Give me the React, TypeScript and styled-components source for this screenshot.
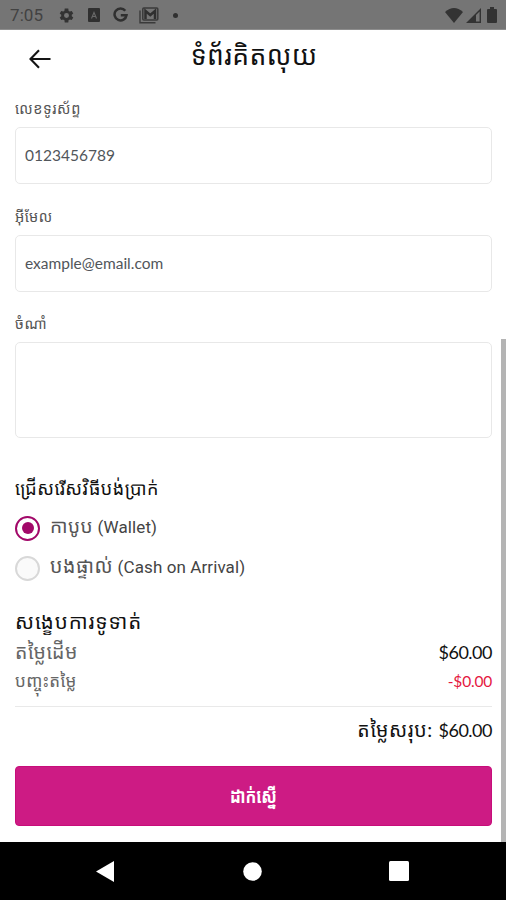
import React from "react";
import styled, { createGlobalStyle } from "styled-components";

const GlobalStyle = createGlobalStyle`
  * { box-sizing: border-box; }
  body { margin: 0; background: #fff; overflow: hidden; }
`;

const khmer = `"Noto Sans Khmer", "Khmer OS"`;

const Screen = styled.div`
  width: 506px;
  height: 900px;
  display: flex;
  flex-direction: column;
  background: #fff;
  color: #111;
  font-family: Lato, ${khmer}, sans-serif;
  white-space: nowrap;
`;

const StatusBar = styled.header`
  height: 30px;
  flex: none;
  display: flex;
  align-items: center;
  justify-content: space-between;
  padding: 1px 9px 0 10px;
  background: #757575;
  border-bottom: 1px solid #8d8d8d;
  color: #333;
`;

const StatusGroup = styled.div<{ $gap: number }>`
  display: flex;
  align-items: center;
  gap: ${(p) => p.$gap}px;
`;

const Clock = styled.span`
  width: 35px;
  font: 17px/20px Roboto, sans-serif;
  letter-spacing: 0.1px;
  color: #424242;
`;

const Body = styled.div`
  flex: 1;
  display: flex;
  justify-content: space-between;
  min-height: 0;
`;

const Page = styled.main`
  width: 492px;
  padding-left: 15px;
  display: flex;
  flex-direction: column;
`;

const ScrollThumb = styled.div`
  width: 5px;
  height: 503px;
  align-self: flex-end;
  background: #b4b4b4;
`;

const TitleBar = styled.div`
  height: 62px;
  flex: none;
  display: grid;
  grid-template-columns: 48px 1fr 48px;
  align-items: center;
  padding: 0 0 4px 1px;
`;

const BackButton = styled.button`
  width: 48px;
  height: 48px;
  padding: 0;
  border: 0;
  background: none;
  display: grid;
  place-items: center;
`;

const Line = styled.span<{ $size: number; $color?: string; $spacing?: number; $latin?: boolean }>`
  font-family: ${(p) => (p.$latin ? "Roboto" : "Lato")}, ${khmer}, sans-serif;
  font-size: ${(p) => p.$size}px;
  line-height: 28px;
  color: ${(p) => p.$color ?? "#111"};
  letter-spacing: ${(p) => p.$spacing ?? 0}px;
  white-space: pre;
`;

const Title = styled.h1`
  margin: 0 0 8px;
  font-size: 26.5px;
  line-height: 40px;
  font-weight: 400;
  letter-spacing: 0.4px;
  text-align: center;
`;

const Field = styled.label<{ $height: number }>`
  height: ${(p) => p.$height}px;
  flex: none;
  display: flex;
  flex-direction: column;
`;

const FieldLabel = styled.span`
  height: 35px;
  padding-top: 3px;
  font-size: 14.5px;
  line-height: 28px;
  letter-spacing: 0.6px;
  color: #555;
`;

const inputLook = `
  width: 477px;
  border: 1px solid #e8e8e8;
  border-radius: 5px;
  background: #fff;
  color: #51565b;
  outline: none;
`;

const Input = styled.input`
  ${inputLook}
  height: 57px;
  padding: 0 9px 2px;
  font: 15.5px Lato, sans-serif;
`;

const TextArea = styled.textarea`
  ${inputLook}
  height: 96px;
  resize: none;
`;

const Methods = styled.section`
  height: 132px;
  flex: none;
  display: flex;
  flex-direction: column;
`;

const MethodRow = styled.div`
  height: 40px;
  display: flex;
  align-items: center;
  gap: 10px;
`;

const MethodName = styled.span`
  display: flex;
  align-items: baseline;
  padding-bottom: 3px;
`;

const Radio = styled.span<{ $on?: boolean }>`
  width: 25px;
  height: 25px;
  border-radius: 50%;
  border: 2px solid ${(p) => (p.$on ? "#a20869" : "#d8d8d8")};
  background: ${(p) => (p.$on ? "#fff" : "#fafafa")};
  display: grid;
  place-items: center;
  &::after {
    content: "";
    width: 12px;
    height: 12px;
    border-radius: 50%;
    background: ${(p) => (p.$on ? "#a20869" : "transparent")};
  }
`;

const Row = styled.div<{ $height: number; $end?: boolean; $lift?: number }>`
  height: ${(p) => p.$height}px;
  padding-bottom: ${(p) => p.$lift ?? 0}px;
  flex: none;
  display: flex;
  align-items: center;
  justify-content: ${(p) => (p.$end ? "flex-end" : "space-between")};
`;

const Rule = styled.hr`
  width: 477px;
  height: 1px;
  margin: 10px 0 9px;
  border: 0;
  flex: none;
  background: #e9e9e9;
`;

const Submit = styled.button`
  width: 477px;
  height: 60px;
  flex: none;
  margin-top: 22px;
  padding: 0 0 3px;
  border: 1px solid #c70d7a;
  border-radius: 4px;
  background: #cd1b84;
  color: #fff;
  font: 700 20px/28px Lato, ${khmer}, sans-serif;
`;

const SubmitLabel = styled.span`
  display: inline-block;
  transform: scaleX(0.8);
`;

const NavBar = styled.nav`
  height: 58px;
  flex: none;
  display: grid;
  grid-template-columns: 1fr 19px 1fr;
  align-items: center;
  padding: 0 97px 0 96px;
  background: #000;
  & > :last-child { justify-self: end; }
`;

const Gear = () => (
  <svg width="17" height="17" viewBox="0 0 24 24" fill="currentColor">
    <path fillRule="evenodd" d="M19.4 13a7 7 0 0 0 0-2l2.2-1.7-2.2-3.8-2.7 1a8 8 0 0 0-1.7-1L14.5 2h-5L9 5.500a8 8 0 0 0-1.700 1l-2.700-1-2.200 3.800L4.600 11a7 7 0 0 0 0 2l-2.200 1.700 2.200 3.800 2.700-1a8 8 0 0 0 1.700 1l.5 3.500h5l.5-3.500a8 8 0 0 0 1.700-1l2.700 1 2.200-3.800zM12 15.500a3.500 3.500 0 1 1 0-7 3.500 3.500 0 0 1 0 7z" />
  </svg>
);

const AppBadge = () => (
  <svg width="12" height="14" viewBox="0 0 12 14">
    <rect width="12" height="14" rx="1" fill="#303030" />
    <path d="M3.500 10.500 6 4.500l2.500 6M4.500 8.500h3" fill="none" stroke="#6a6a6a" strokeWidth="1.100" />
  </svg>
);

const GoogleMark = () => (
  <svg width="15" height="16" viewBox="0 0 15 16" fill="none" stroke="#303030" strokeWidth="2.500">
    <path d="M12.300 3.700A6 6 0 1 0 13.500 8.300H7.800" />
  </svg>
);

const MailStack = () => (
  <svg width="20" height="17" viewBox="0 0 20 17" fill="none" stroke="#3a3a3a">
    <path d="M1 3.500v12.300h15.500" strokeWidth="1.400" />
    <rect x="3.800" y="1" width="15" height="12" rx="1" strokeWidth="1.500" />
    <path d="M6.500 12V4l4.800 4L16 4v8" stroke="#303030" strokeWidth="2.500" />
  </svg>
);

const Dot = styled.i`
  width: 5px;
  height: 5px;
  border-radius: 50%;
  background: #303030;
`;

const Wifi = () => (
  <svg width="18" height="15" viewBox="0 0 18 15" fill="#333">
    <path d="M0 4Q9-4 18 4L9 15z" />
  </svg>
);

const Signal = () => (
  <svg width="15" height="15" viewBox="0 0 15 15" fill="#333">
    <path fillRule="evenodd" d="M15 0v15H0zM13.600 3.400 10 7v6.600h3.600z" />
  </svg>
);

const Battery = () => (
  <svg width="10" height="16" viewBox="0 0 10 16" fill="#333">
    <path d="M3 0h4v2h2q1 0 1 1v12q0 1-1 1H1q-1 0-1-1V3q0-1 1-1h2z" />
  </svg>
);

export default function App() {
  return (
    <Screen>
      <GlobalStyle />
      <StatusBar>
        <StatusGroup $gap={13}>
          <Clock>7:05</Clock>
          <Gear />
          <AppBadge />
          <StatusGroup $gap={11}>
            <GoogleMark />
            <StatusGroup $gap={14}>
              <MailStack />
              <Dot />
            </StatusGroup>
          </StatusGroup>
        </StatusGroup>
        <StatusGroup $gap={6}>
          <StatusGroup $gap={3}>
            <Wifi />
            <Signal />
          </StatusGroup>
          <Battery />
        </StatusGroup>
      </StatusBar>
      <Body>
        <Page>
          <TitleBar>
            <BackButton aria-label="Back">
              <svg width="22" height="20" viewBox="0 0 22 20" fill="none" stroke="#151515" strokeWidth="2.100">
                <path d="M21.500 10H1.800M10 1.300 1.500 10l8.500 8.700" />
              </svg>
            </BackButton>
            <Title>ទំព័រគិតលុយ</Title>
          </TitleBar>
          <Field $height={108}>
            <FieldLabel>លេខទូរស័ព្ទ</FieldLabel>
            <Input defaultValue="0123456789" />
          </Field>
          <Field $height={107}>
            <FieldLabel>អ៊ីមែល</FieldLabel>
            <Input defaultValue="example@email.com" />
          </Field>
          <Field $height={167}>
            <FieldLabel>ចំណាំ</FieldLabel>
            <TextArea />
          </Field>
          <Methods>
            <Row $height={34} $lift={6}>
              <Line $size={18} $spacing={0.5}>ជ្រើសរើសវិធីបង់ប្រាក់</Line>
            </Row>
            <MethodRow>
              <Radio $on />
              <MethodName>
                <Line $size={19} $spacing={0.5} $color="#555">កាបូប</Line>
                <Line $size={17} $spacing={0.1} $color="#444" $latin> (Wallet)</Line>
              </MethodName>
            </MethodRow>
            <MethodRow>
              <Radio />
              <MethodName>
                <Line $size={19.5} $spacing={0.6} $color="#555">បងផ្ទាល់</Line>
                <Line $size={17} $spacing={0.1} $color="#444" $latin> (Cash on Arrival)</Line>
              </MethodName>
            </MethodRow>
          </Methods>
          <Row $height={30} $lift={1}>
            <Line $size={20.5} $spacing={0.9}>សង្ខេបការទូទាត់</Line>
          </Row>
          <Row $height={32}>
            <Line $size={19.5} $spacing={0.5} $color="#666">តម្លៃដើម</Line>
            <Line $size={18} $spacing={-0.5}>$60.00</Line>
          </Row>
          <Row $height={28} $lift={3}>
            <Line $size={17} $spacing={0.4} $color="#666">បញ្ចុះតម្លៃ</Line>
            <Line $size={15.5} $spacing={-0.2} $color="#e5173f">-$0.00</Line>
          </Row>
          <Rule />
          <Row $height={28} $end>
            <Line $size={19.5} $spacing={0.7}>តម្លៃសរុប: </Line>
            <Line $size={18} $spacing={-0.5}>$60.00</Line>
          </Row>
          <Submit>
            <SubmitLabel>ដាក់ស្នើ</SubmitLabel>
          </Submit>
        </Page>
        <ScrollThumb />
      </Body>
      <NavBar>
        <svg width="18" height="21" viewBox="0 0 18 21" fill="#fff">
          <path d="M18 0v21L0 10.500z" />
        </svg>
        <svg width="19" height="19" viewBox="0 0 19 19" fill="#fff">
          <circle cx="9.500" cy="9.500" r="9.300" />
        </svg>
        <svg width="20" height="20" viewBox="0 0 20 20" fill="#fff">
          <rect width="20" height="20" rx="1.500" />
        </svg>
      </NavBar>
    </Screen>
  );
}
